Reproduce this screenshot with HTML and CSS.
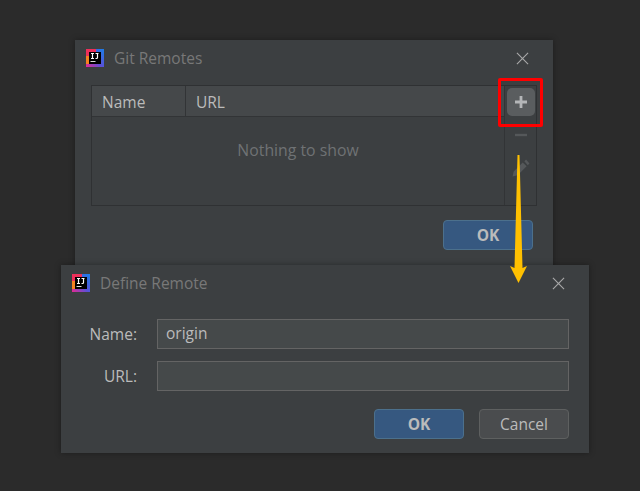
FILE: index.html
```html
<!DOCTYPE html>
<html lang="en">
<head>
<meta charset="utf-8">
<title>Git Remotes</title>
<link rel="stylesheet" href="styles.css">
</head>
<body>
<svg width="0" height="0" class="defs">
  <defs>
    <linearGradient id="ij" x1="0" y1="1" x2="1" y2="0">
      <stop offset="0" stop-color="#e8288f"/>
      <stop offset="0.45" stop-color="#5a50d8"/>
      <stop offset="1" stop-color="#1a7fe8"/>
    </linearGradient>
    <symbol id="logo" viewBox="0 0 18 18">
      <rect width="18" height="18" fill="url(#ij)"/>
      <rect x="0" y="0" width="10" height="3" fill="#ee2f5a"/>
      <rect x="0" y="0" width="3" height="7" fill="#ee2f5a"/>
      <rect x="0" y="7" width="3" height="8" fill="#f5811f"/>
      <rect x="3" y="3" width="12" height="12" fill="#000"/>
      <rect x="4.500" y="12" width="5" height="1" fill="#ddd"/>
      <path d="M5 4.500h3M6.500 4.500v5M5 9.500h3M9.500 4.500h3M11.500 4.500v4q0 1-1 1h-1" fill="none" stroke="#fff" stroke-width="1.200"/>
    </symbol>
  </defs>
</svg>

<section class="dialog dialog-git">
  <header class="titlebar">
    <svg class="logo"><use href="#logo"/></svg>
    <h1 class="title">Git Remotes</h1>
    <svg class="close" viewBox="0 0 14 14"><path d="M1 1l12 12M13 1L1 13"/></svg>
  </header>
  <div class="table">
    <div class="table-main">
      <div class="table-head">
        <div class="col col-name">Name</div>
        <div class="col col-url">URL</div>
      </div>
      <div class="table-empty">Nothing to show</div>
    </div>
    <div class="toolbar">
      <button class="tool tool-active" aria-label="Add">
        <svg viewBox="0 0 14 14" class="tool-icon"><path d="M7 1v12M1 7h12" stroke="#b4b6b8" stroke-width="2.800"/></svg>
      </button>
      <button class="tool" aria-label="Remove">
        <svg viewBox="0 0 14 14" class="tool-icon"><path d="M1 7h12" stroke="#55585a" stroke-width="2.400"/></svg>
      </button>
      <button class="tool" aria-label="Edit">
        <svg viewBox="0 0 16 16" class="tool-icon tool-edit"><path d="M0.500 15.500l1-4.500 8-8 3.500 3.500-8 8zM11 2l1.500-1.500 3 3.500L14 5.500z" fill="#55585a"/></svg>
      </button>
    </div>
  </div>
  <footer class="actions actions-git">
    <button class="btn btn-primary">OK</button>
  </footer>
</section>

<section class="dialog dialog-remote">
  <header class="titlebar">
    <svg class="logo"><use href="#logo"/></svg>
    <h1 class="title">Define Remote</h1>
    <svg class="close" viewBox="0 0 14 14"><path d="M1 1l12 12M13 1L1 13"/></svg>
  </header>
  <div class="form">
    <label class="form-label">Name:</label>
    <div class="input">origin</div>
    <label class="form-label">URL:</label>
    <div class="input"></div>
  </div>
  <footer class="actions actions-remote">
    <button class="btn btn-primary">OK</button>
    <button class="btn">Cancel</button>
  </footer>
</section>

<div class="highlight"></div>
<svg class="arrow" viewBox="0 0 20 130" width="20" height="130">
  <path d="M8.500 1L10.500 1L13.500 114L18 112L9.500 129L1 112L5.500 114Z" fill="#ffc000"/>
</svg>
</body>
</html>
```

FILE: styles.css
```css
* { box-sizing: border-box; }
html, body { margin: 0; height: 100%; }
body {
  position: relative;
  width: 640px;
  height: 491px;
  overflow: hidden;
  background: #2b2b2b;
  font-family: "Open Sans", "Noto Sans", sans-serif;
  font-size: 15.500px;
  color: #bbbbbb;
}
.defs { position: absolute; }
.dialog {
  position: absolute;
  display: flex;
  flex-direction: column;
  background: #3c3f41;
  box-shadow: 0 0 6px rgba(0, 0, 0, 0.35);
}
.dialog-git { left: 75px; top: 40px; width: 478px; height: 240px; padding: 0 16px; }
.dialog-remote { left: 61px; top: 265px; width: 528px; height: 188px; padding: 0 20px 0 11px; }
.titlebar { display: flex; align-items: center; height: 36px; }
.logo { width: 18px; height: 18px; flex: none; }
.dialog-git .titlebar { margin: 0 0 9px -5px; }
.title {
  margin: 0 0 0 10px;
  flex: 1;
  font-size: 15.500px;
  font-weight: 400;
  color: #787878;
}
.close { width: 13px; height: 13px; flex: none; }
.dialog-git .close { margin-right: 8px; }
.dialog-remote .close { margin-right: 4px; }
.close path { stroke: #a8a8a8; stroke-width: 1.200; fill: none; }
.table {
  display: flex;
  height: 121px;
  border: 1px solid #2f3133;
}
.table-main { flex: 1; display: flex; flex-direction: column; }
.table-head {
  display: flex;
  align-items: center;
  height: 31px;
  background: #45484a;
  border-bottom: 1px solid #323436;
}
.col { height: 100%; display: flex; align-items: center; padding-top: 2px; color: #bbbbbb; }
.col-name { width: 94px; padding-left: 10px; border-right: 1px solid #323436; }
.col-url { padding-left: 10px; }
.table-empty {
  flex: 1;
  text-align: center;
  padding-top: 22px;
  color: #6f7274;
  font-size: 15.800px;
}
.toolbar {
  width: 32px;
  flex: none;
  display: flex;
  flex-direction: column;
  align-items: center;
  gap: 5px;
  padding-top: 2px;
  border-left: 1px solid #323436;
}
.tool {
  width: 28px;
  height: 28px;
  padding: 0;
  display: flex;
  align-items: center;
  justify-content: center;
  border: 0;
  border-radius: 5px;
  background: none;
}
.tool-active { background: #5a5d5f; }
.tool-icon { width: 14px; height: 14px; }
.tool-edit { width: 18px; height: 18px; }
.actions { display: flex; justify-content: flex-end; gap: 15px; }
.actions-git { margin-top: 14px; padding-right: 4px; }
.actions-remote { margin-top: 18px; }
.btn {
  width: 90px;
  height: 30px;
  padding: 0;
  border: 1px solid #5e6060;
  border-radius: 4px;
  background: #4a4c4e;
  color: #bbbbbb;
  font: inherit;
}
.btn-primary {
  background: #365880;
  border-color: #4c708c;
  color: #bbbbbb;
  font-weight: 700;
}
.form {
  display: grid;
  grid-template-columns: 65px 1fr;
  column-gap: 20px;
  row-gap: 12px;
  margin-top: 18px;
}
.form-label {
  display: flex;
  align-items: center;
  justify-content: flex-end;
  margin-top: -1px;
  color: #bbbbbb;
}
.input {
  height: 30px;
  padding: 0 8px 2px;
  display: flex;
  align-items: center;
  background: #45494a;
  border: 1px solid #646464;
  color: #bbbbbb;
}
.highlight {
  position: absolute;
  left: 498px;
  top: 78px;
  width: 45px;
  height: 49px;
  border: 3px solid #ff0000;
  border-radius: 2px;
}
.arrow { position: absolute; left: 509px; top: 154px; }
```
